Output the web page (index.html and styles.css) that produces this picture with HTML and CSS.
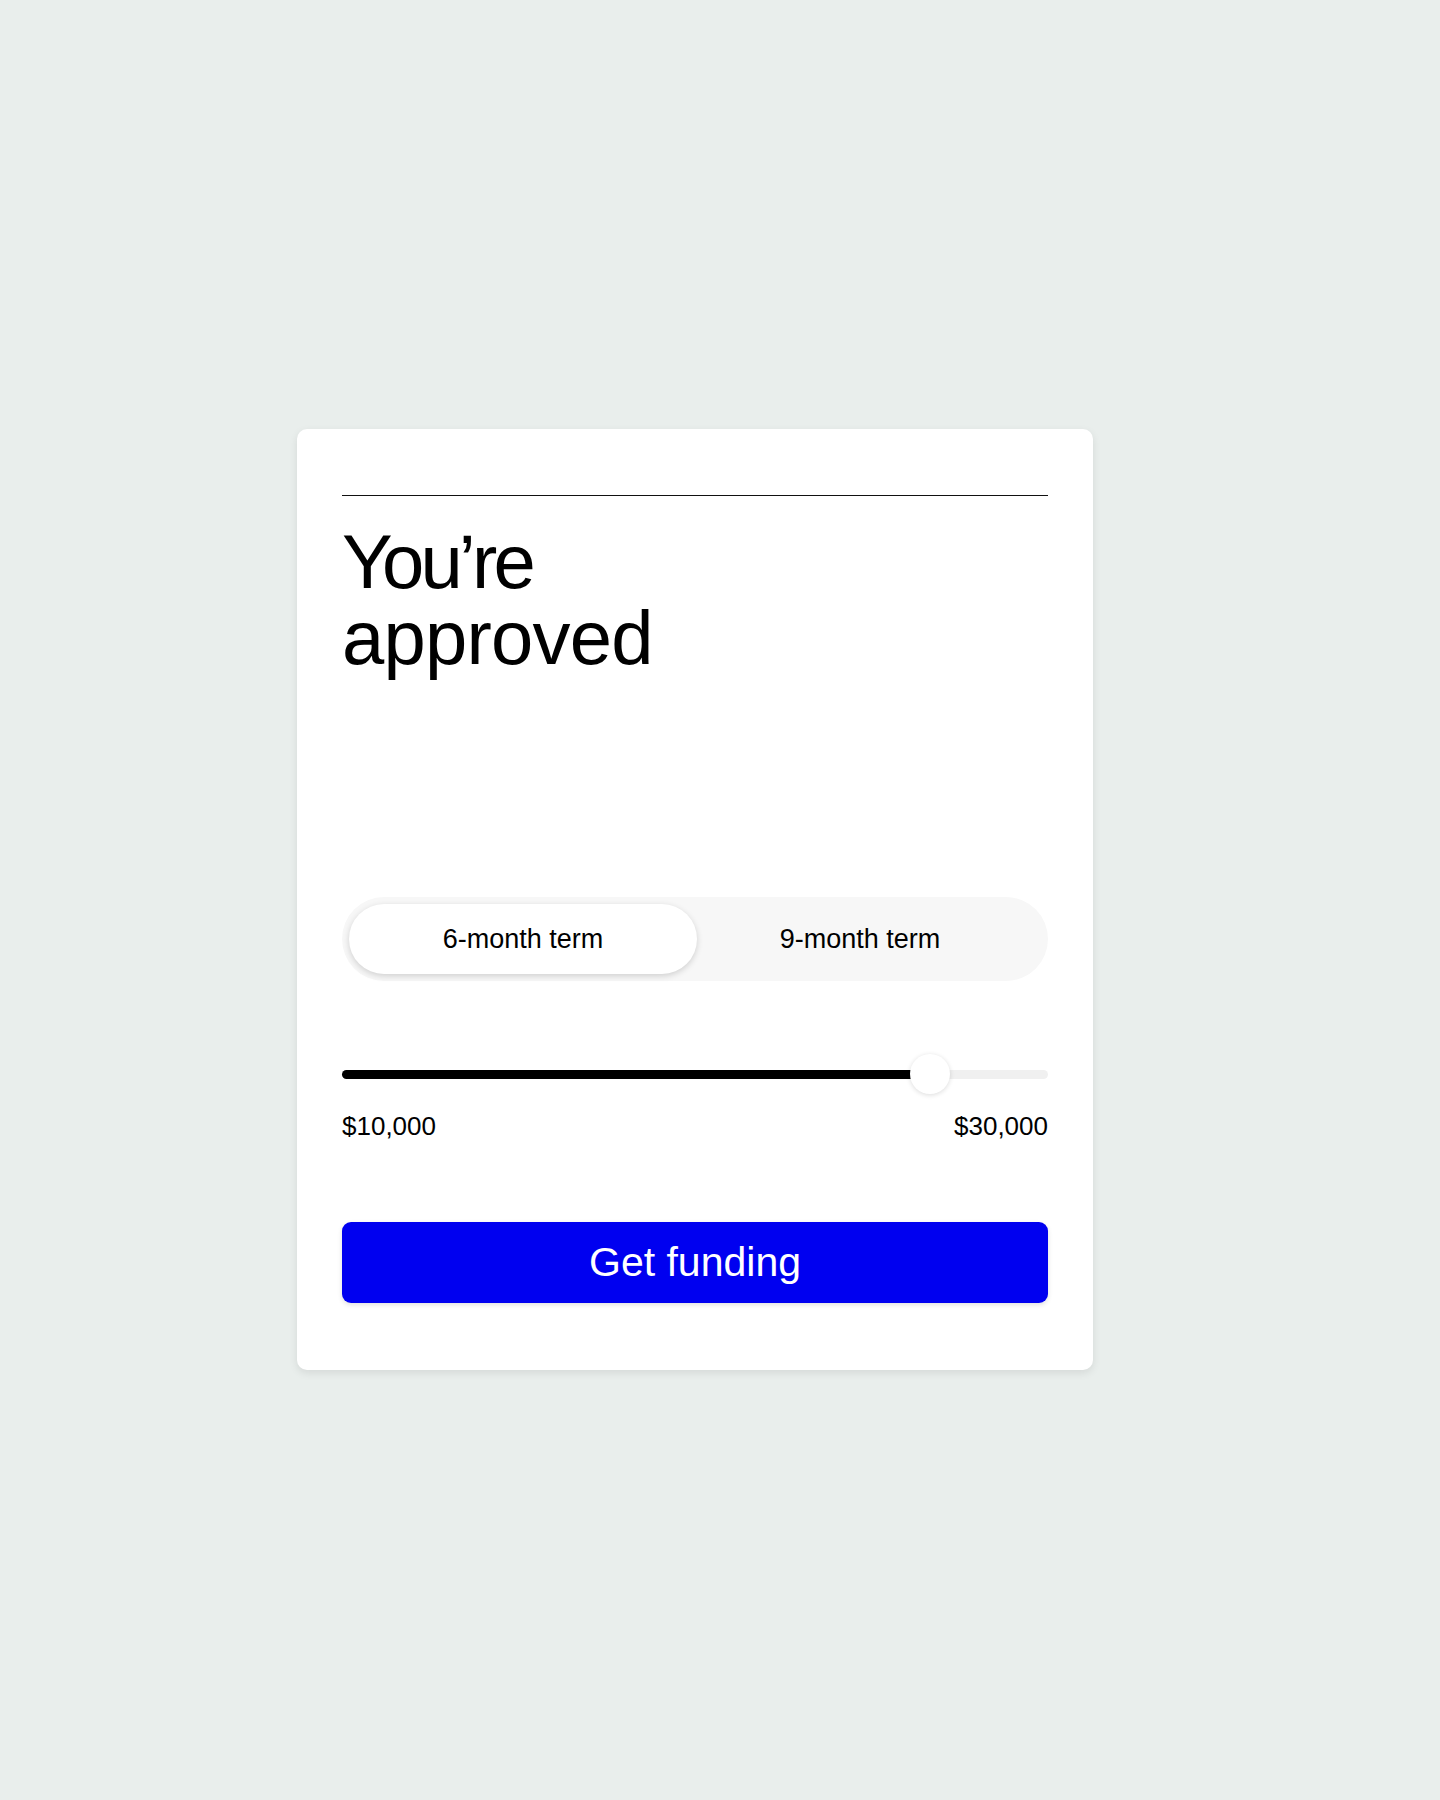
FILE: index.html
```html
<!DOCTYPE html>
<html lang="en">
<head>
<meta charset="utf-8">
<title>You're approved</title>
<link rel="stylesheet" href="styles.css">
</head>
<body>
<main class="page">
  <section class="card">
    <div class="rule"></div>
    <h1 class="title"><span class="title-line tight">You’re</span><span class="title-line">approved</span></h1>
    <div class="toggle">
      <button class="toggle-opt is-active">6-month term</button>
      <button class="toggle-opt alt">9-month term</button>
    </div>
    <div class="slider">
      <div class="track">
        <div class="fill" style="width: 83.3%"></div>
        <div class="thumb" style="left: 83.3%"></div>
      </div>
    </div>
    <div class="range-labels">
      <span>$10,000</span>
      <span>$30,000</span>
    </div>
    <button class="cta">Get funding</button>
  </section>
</main>
</body>
</html>
```

FILE: styles.css
```css
* { box-sizing: border-box; }
html, body { margin: 0; padding: 0; }
body {
  background: #e9eeec;
  font-family: "Liberation Sans", Arial, Helvetica, sans-serif;
  color: #000;
  min-height: 1800px;
}
.page {
  display: flex;
  padding: 429px 0 0 297px;
}
.card {
  width: 796px;
  height: 941px;
  background: #fff;
  border-radius: 10px;
  box-shadow: 0 3px 9px rgba(0, 0, 0, 0.09);
  padding: 66px 45px 67px;
  display: flex;
  flex-direction: column;
}
.rule {
  height: 1px;
  background: #111;
}
.title {
  margin: 28px 0 0;
  font-size: 76px;
  line-height: 76px;
  font-weight: 400;
  letter-spacing: -0.01em;
}
.title-line {
  display: block;
  height: 76px;
}
.title-line.tight {
  letter-spacing: -0.05em;
}
.toggle {
  margin-top: 221px;
  height: 84px;
  background: #f7f7f7;
  border-radius: 42px;
  padding: 7px;
  display: grid;
  grid-template-columns: 348px 1fr;
}
.toggle-opt {
  border: 0;
  background: transparent;
  font-family: inherit;
  font-size: 27px;
  color: #000;
  border-radius: 36px;
  padding: 0;
  cursor: pointer;
}
.toggle-opt.alt {
  padding-right: 18px;
}
.toggle-opt.is-active {
  background: #fff;
  box-shadow: 0 2px 6px rgba(0, 0, 0, 0.16);
}
.slider {
  margin-top: 73px;
  height: 40px;
  display: flex;
  align-items: center;
}
.track {
  position: relative;
  width: 100%;
  height: 9px;
  background: #f0f0f0;
  border-radius: 5px;
}
.fill {
  height: 100%;
  background: #000;
  border-radius: 5px 0 0 5px;
}
.thumb {
  position: absolute;
  top: 50%;
  width: 40px;
  height: 40px;
  margin: -20px 0 0 -20px;
  border-radius: 50%;
  background: #fff;
  box-shadow: 0 1px 5px rgba(0, 0, 0, 0.14);
}
.range-labels {
  margin-top: 17px;
  display: flex;
  justify-content: space-between;
  font-size: 26px;
  line-height: 31px;
}
.cta {
  margin-top: 80px;
  height: 81px;
  border: 0;
  border-radius: 9px;
  background: #0000f0;
  color: #fff;
  font-family: inherit;
  font-size: 41px;
  box-shadow: 0 2px 5px rgba(0, 0, 0, 0.12);
  cursor: pointer;
}
```
